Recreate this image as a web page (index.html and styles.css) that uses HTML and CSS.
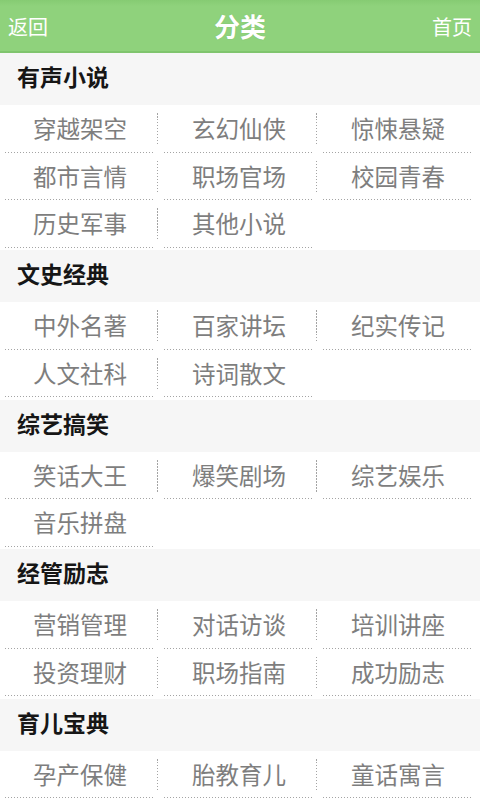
FILE: index.html
```html
<!DOCTYPE html>
<html lang="zh-CN">
<head>
<meta charset="utf-8">
<title>分类</title>
<link rel="stylesheet" href="styles.css">
</head>
<body>
<header class="topbar">
  <a class="nav-link">返回</a>
  <h1 class="title">分类</h1>
  <a class="nav-link">首页</a>
</header>

<section class="group">
  <h2 class="group-title">有声小说</h2>
  <div class="row"><span class="cell">穿越架空</span><span class="sep"></span><span class="cell">玄幻仙侠</span><span class="sep"></span><span class="cell">惊悚悬疑</span></div>
  <div class="row"><span class="cell">都市言情</span><span class="sep"></span><span class="cell">职场官场</span><span class="sep"></span><span class="cell">校园青春</span></div>
  <div class="row"><span class="cell">历史军事</span><span class="sep"></span><span class="cell">其他小说</span></div>
</section>

<section class="group">
  <h2 class="group-title">文史经典</h2>
  <div class="row"><span class="cell">中外名著</span><span class="sep"></span><span class="cell">百家讲坛</span><span class="sep"></span><span class="cell">纪实传记</span></div>
  <div class="row"><span class="cell">人文社科</span><span class="sep"></span><span class="cell">诗词散文</span></div>
</section>

<section class="group">
  <h2 class="group-title">综艺搞笑</h2>
  <div class="row"><span class="cell">笑话大王</span><span class="sep"></span><span class="cell">爆笑剧场</span><span class="sep"></span><span class="cell">综艺娱乐</span></div>
  <div class="row"><span class="cell">音乐拼盘</span></div>
</section>

<section class="group">
  <h2 class="group-title">经管励志</h2>
  <div class="row"><span class="cell">营销管理</span><span class="sep"></span><span class="cell">对话访谈</span><span class="sep"></span><span class="cell">培训讲座</span></div>
  <div class="row"><span class="cell">投资理财</span><span class="sep"></span><span class="cell">职场指南</span><span class="sep"></span><span class="cell">成功励志</span></div>
</section>

<section class="group">
  <h2 class="group-title">育儿宝典</h2>
  <div class="row"><span class="cell">孕产保健</span><span class="sep"></span><span class="cell">胎教育儿</span><span class="sep"></span><span class="cell">童话寓言</span></div>
</section>
</body>
</html>
```

FILE: styles.css
```css
html, body {
  margin: 0;
  padding: 0;
  background: #ffffff;
  font-family: "Noto Sans CJK SC", "Noto Sans", "Liberation Sans", sans-serif;
  overflow: hidden;
}

.topbar {
  height: 51px;
  display: flex;
  align-items: center;
  justify-content: space-between;
  padding: 0 8px;
  background: linear-gradient(to bottom, #86cb73 0, #8fd27c 6px, #8fd27c 100%);
  border-bottom: 2px solid #80c56e;
}

.nav-link {
  color: #ffffff;
  font-size: 20px;
  line-height: 1;
  padding-top: 2px;
}

.title {
  margin: 0;
  color: #ffffff;
  font-size: 26px;
  font-weight: bold;
  line-height: 1;
  text-shadow: 0 0 1px rgba(80, 140, 60, 0.4);
}

.group {
  margin-bottom: 2.5px;
}

.group-title {
  margin: 0;
  height: 52px;
  display: flex;
  align-items: center;
  padding-left: 17px;
  padding-bottom: 6px;
  box-sizing: border-box;
  background: #f6f6f6;
  color: #161616;
  font-size: 23px;
  font-weight: bold;
}

.row {
  display: flex;
  padding-left: 5px;
  height: 47.5px;
}

.cell {
  width: 150px;
  box-sizing: border-box;
  padding-bottom: 1px;
  display: flex;
  align-items: center;
  justify-content: center;
  color: #7e7e7e;
  font-size: 23.5px;
  background-image: repeating-linear-gradient(to right, #a4a4a4 0, #a4a4a4 1.5px, transparent 1.5px, transparent 3px);
  background-size: 100% 1px;
  background-position: left bottom;
  background-repeat: no-repeat;
}

.sep {
  width: 1px;
  margin: 8px 6px 7px 2px;
  background-image: repeating-linear-gradient(to bottom, #a4a4a4 0, #a4a4a4 1.5px, transparent 1.5px, transparent 3px);
}
```
